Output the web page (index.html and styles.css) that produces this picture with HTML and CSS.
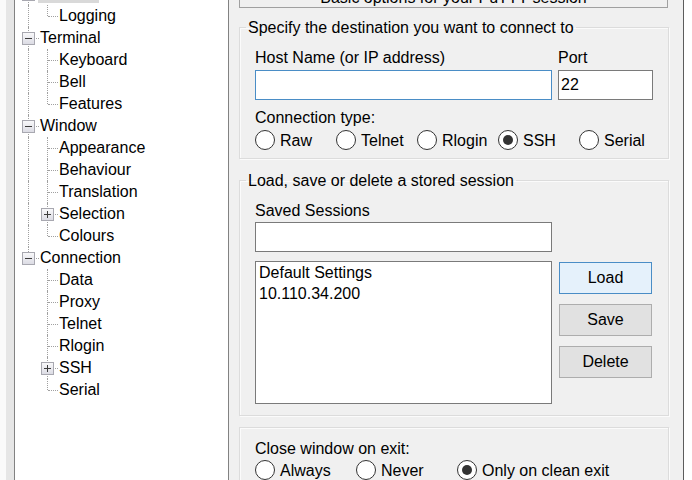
FILE: index.html
```html
<!DOCTYPE html>
<html>
<head>
<meta charset="utf-8">
<title>PuTTY Configuration</title>
<link rel="stylesheet" href="styles.css">
</head>
<body>
<div class="app">
  <div class="edge"></div>

  <div class="tree">
    <div class="row"><span class="g tee"><span class="box minus"></span></span><span class="item selected">Session</span></div>
    <div class="row"><span class="g v"></span><span class="g ell"></span><span class="item">Logging</span></div>
    <div class="row"><span class="g tee"><span class="box minus"></span></span><span class="item">Terminal</span></div>
    <div class="row"><span class="g v"></span><span class="g tee"></span><span class="item">Keyboard</span></div>
    <div class="row"><span class="g v"></span><span class="g tee"></span><span class="item">Bell</span></div>
    <div class="row"><span class="g v"></span><span class="g ell"></span><span class="item">Features</span></div>
    <div class="row"><span class="g tee"><span class="box minus"></span></span><span class="item">Window</span></div>
    <div class="row"><span class="g v"></span><span class="g tee"></span><span class="item">Appearance</span></div>
    <div class="row"><span class="g v"></span><span class="g tee"></span><span class="item">Behaviour</span></div>
    <div class="row"><span class="g v"></span><span class="g tee"></span><span class="item">Translation</span></div>
    <div class="row"><span class="g v"></span><span class="g tee"><span class="box plus"></span></span><span class="item">Selection</span></div>
    <div class="row"><span class="g v"></span><span class="g ell"></span><span class="item">Colours</span></div>
    <div class="row"><span class="g ell"><span class="box minus"></span></span><span class="item">Connection</span></div>
    <div class="row"><span class="g"></span><span class="g tee"></span><span class="item">Data</span></div>
    <div class="row"><span class="g"></span><span class="g tee"></span><span class="item">Proxy</span></div>
    <div class="row"><span class="g"></span><span class="g tee"></span><span class="item">Telnet</span></div>
    <div class="row"><span class="g"></span><span class="g tee"></span><span class="item">Rlogin</span></div>
    <div class="row"><span class="g"></span><span class="g tee"><span class="box plus"></span></span><span class="item">SSH</span></div>
    <div class="row"><span class="g"></span><span class="g ell"></span><span class="item">Serial</span></div>
  </div>

  <div class="panel">
    <div class="banner">Basic options for your PuTTY session</div>

    <fieldset class="group g-dest">
      <legend>Specify the destination you want to connect to</legend>
      <div class="gbody">
        <div class="hostgrid">
          <div class="text">Host Name (or IP address)</div>
          <div class="text">Port</div>
          <div class="edit focused"></div>
          <div class="edit">22</div>
        </div>
        <div class="text label-gap">Connection type:</div>
        <div class="radios five">
          <div class="radio"><span class="dot"></span>Raw</div>
          <div class="radio"><span class="dot"></span>Telnet</div>
          <div class="radio"><span class="dot"></span>Rlogin</div>
          <div class="radio"><span class="dot on"></span>SSH</div>
          <div class="radio"><span class="dot"></span>Serial</div>
        </div>
      </div>
    </fieldset>

    <fieldset class="group g-sess">
      <legend>Load, save or delete a stored session</legend>
      <div class="gbody">
        <div class="text">Saved Sessions</div>
        <div class="edit wide sess-edit"></div>
        <div class="sessrow">
          <div class="list">
            <div class="li">Default Settings</div>
            <div class="li">10.110.34.200</div>
          </div>
          <div class="buttons">
            <div class="btn default">Load</div>
            <div class="btn">Save</div>
            <div class="btn">Delete</div>
          </div>
        </div>
      </div>
    </fieldset>

    <fieldset class="group g-exit">
      <div class="gbody">
        <div class="text">Close window on exit:</div>
        <div class="radios three">
          <div class="radio"><span class="dot"></span>Always</div>
          <div class="radio"><span class="dot"></span>Never</div>
          <div class="radio"><span class="dot on"></span>Only on clean exit</div>
        </div>
      </div>
    </fieldset>
  </div>

  <div class="rim"></div>
</div>
</body>
</html>
```

FILE: styles.css
```css
html, body {
  margin: 0;
  padding: 0;
  background: #f0f0f0;
}

body {
  font-family: "Liberation Sans", Arial, sans-serif;
  font-size: 16px;
  color: #000;
}

.app {
  display: flex;
  width: 692px;
  height: 480px;
  overflow: hidden;
  background: #f0f0f0;
}

.edge {
  flex: none;
  width: 14px;
  background: linear-gradient(to right, #fafafa 0 6px, #e6e6e6 6px 14px);
}

/* ---------- tree ---------- */
.tree {
  flex: none;
  box-sizing: border-box;
  width: 215px;
  height: 520px;
  margin-top: -18px;
  background: #fff;
  border: 1px solid #828282;
}

.row {
  display: flex;
  height: 22px;
  line-height: 22px;
  white-space: nowrap;
}

.g {
  position: relative;
  flex: none;
  width: 19px;
  height: 22px;
}

.g.v::before,
.g.tee::before,
.g.ell::before {
  content: "";
  position: absolute;
  left: 13px;
  top: 0;
  height: 22px;
  border-left: 1px dotted #a0a0a0;
}

.g.ell::before {
  height: 11px;
}

.g.tee::after,
.g.ell::after {
  content: "";
  position: absolute;
  left: 14px;
  top: 11px;
  width: 10px;
  border-top: 1px dotted #a0a0a0;
}

.box {
  position: absolute;
  z-index: 1;
  left: 7px;
  top: 5px;
  width: 13px;
  height: 13px;
  box-sizing: border-box;
  border: 1px solid #a8a8b0;
  background: linear-gradient(to bottom, #f8f8fa, #dcdce4);
}

.box::before {
  content: "";
  position: absolute;
  left: 2px;
  top: 5px;
  width: 7px;
  height: 1px;
  background: #3c3c3c;
}

.box.plus::after {
  content: "";
  position: absolute;
  left: 5px;
  top: 2px;
  width: 1px;
  height: 7px;
  background: #3c3c3c;
}

.item {
  margin-left: 6px;
}

.item.selected {
  margin-left: 4px;
  padding: 0 2px;
  background: #d9d9d9;
  line-height: 20px;
  height: 20px;
  margin-top: 0;
}

/* ---------- right panel ---------- */
.panel {
  flex: none;
  width: 430px;
  margin-left: 10px;
}

.banner {
  box-sizing: border-box;
  width: 429px;
  height: 30px;
  margin-top: -22px;
  border: 1px solid #a0a0a0;
  display: flex;
  align-items: flex-end;
  justify-content: center;
  line-height: 18px;
  padding-bottom: 0;
}

.group {
  margin: 0;
  padding: 0;
  min-width: 0;
  border: 1px solid #dcdcdc;
  box-shadow: inset 1px 1px 0 #fbfbfb, 1px 1px 0 #fbfbfb;
}

.group legend {
  margin-left: 6px;
  padding: 0 2px;
  line-height: 20px;
  height: 18px;
}

.g-dest {
  margin-top: 10px;
}

.g-sess {
  margin-top: 12px;
}

.g-exit {
  margin-top: 11px;
  height: 80px;
}

.gbody {
  padding: 12px 15px 8px 15px;
}

.g-sess .gbody {
  padding-bottom: 11px;
}

.g-exit .gbody {
  padding-top: 11px;
}

.text {
  line-height: 20px;
  height: 18px;
  white-space: nowrap;
}

.hostgrid {
  display: grid;
  grid-template-columns: 297px 95px;
  column-gap: 6px;
  row-gap: 4px;
}

.edit {
  box-sizing: border-box;
  height: 30px;
  background: #fff;
  border: 1px solid #7a7a7a;
  padding-left: 2px;
  line-height: 28px;
}

.edit.focused {
  border-color: #4a8dc6;
}

.label-gap {
  margin-top: 8px;
}

.radios {
  display: grid;
  margin-top: 4px;
  height: 20px;
}

.radios.five {
  grid-template-columns: repeat(5, 81px);
}

.radios.three {
  margin-top: 3px;
  grid-template-columns: repeat(2, 101px) auto;
}

.radio {
  display: flex;
  align-items: flex-start;
  gap: 5px;
  height: 20px;
  line-height: 22px;
  white-space: nowrap;
}

.dot {
  position: relative;
  flex: none;
  box-sizing: border-box;
  width: 20px;
  height: 20px;
  border: 1px solid #333;
  border-radius: 50%;
  background: #fff;
}

.dot.on::after {
  content: "";
  position: absolute;
  left: 4px;
  top: 4px;
  width: 10px;
  height: 10px;
  border-radius: 50%;
  background: #333;
}

.edit.wide {
  width: 297px;
}

.sess-edit {
  margin-top: 3px;
}

.sessrow {
  display: flex;
  margin-top: 9px;
}

.list {
  box-sizing: border-box;
  width: 297px;
  height: 143px;
  background: #fff;
  border: 1px solid #7a7a7a;
  padding-left: 3px;
}

.li {
  line-height: 21px;
  height: 21px;
}

.buttons {
  display: flex;
  flex-direction: column;
  gap: 10px;
  margin-left: 7px;
  margin-top: 1px;
}

.btn {
  box-sizing: border-box;
  width: 93px;
  height: 32px;
  line-height: 30px;
  text-align: center;
  background: #e1e1e1;
  border: 1px solid #adadad;
}

.btn.default {
  background: #e5f1fb;
  border-color: #4a8dc6;
}

/* ---------- right rim ---------- */
.rim {
  flex: none;
  width: 9px;
  margin-left: 14px;
  background: #fff;
  border-left: 1px solid #5c5c5c;
  box-sizing: border-box;
}
```
